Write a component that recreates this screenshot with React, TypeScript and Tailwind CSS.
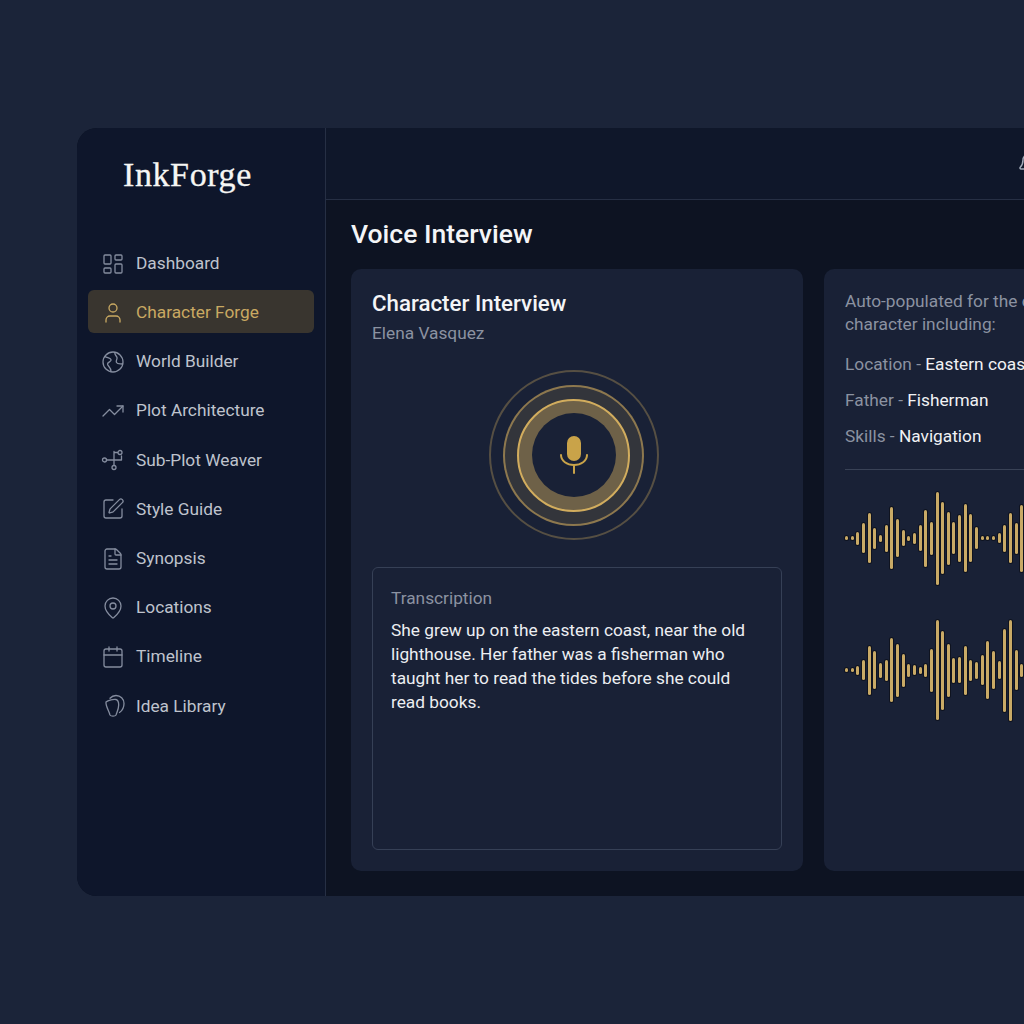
import React from "react";
import { Bell, Calendar, FileText, LayoutDashboard, MapPin, SquarePen, TrendingUp, User } from "lucide-react";

type IconProps = { className?: string; strokeWidth?: number };

function GlobeIcon({ className, strokeWidth }: IconProps) {
  return (
    <svg viewBox="0 0 24 24" fill="none" stroke="currentColor" strokeWidth={strokeWidth} strokeLinecap="round" strokeLinejoin="round" className={className}>
      <circle cx="12" cy="12" r="10" />
      <path d="M4 6.500c2 1.500 5 1 6 3s-3.500 2.500-3.500 4.500 3.500 3 3.500 7.500" />
      <path d="M14 2.500c-1 2 1.500 3 2 5s-1.500 3-.5 5 4 1 6 1.500" />
    </svg>
  );
}

function WeaverIcon({ className, strokeWidth }: IconProps) {
  return (
    <svg viewBox="0 0 24 24" fill="none" stroke="currentColor" strokeWidth={strokeWidth} strokeLinecap="round" className={className}>
      <circle cx="3.500" cy="12" r="2" />
      <circle cx="13" cy="19.500" r="2" />
      <circle cx="19" cy="4.500" r="2" />
      <path d="M5.500 12H20M13 3.500v14M13 4.500h3.500M20.500 8v4" />
    </svg>
  );
}

function IdeaIcon({ className, strokeWidth }: IconProps) {
  return (
    <svg viewBox="0 0 24 24" fill="none" stroke="currentColor" strokeWidth={strokeWidth} strokeLinecap="round" strokeLinejoin="round" className={className}>
      <path d="M5 8c2-2 8-3 10-2.500 2 .5 2.700 3 2.700 5.500 0 4-1.700 7-2.700 10-1 1.500-5 1.500-6 0C8 17 4.500 12 5 8Z" />
      <path d="M9 4.300C11 2 13 1.500 15 1.500c4.500 0 8 3.500 8 8 0 4-1.500 7-4.500 9" />
    </svg>
  );
}

const navItems = [
  { label: "Dashboard", icon: LayoutDashboard },
  { label: "Character Forge", icon: User, active: true },
  { label: "World Builder", icon: GlobeIcon },
  { label: "Plot Architecture", icon: TrendingUp },
  { label: "Sub-Plot Weaver", icon: WeaverIcon },
  { label: "Style Guide", icon: SquarePen },
  { label: "Synopsis", icon: FileText },
  { label: "Locations", icon: MapPin },
  { label: "Timeline", icon: Calendar },
  { label: "Idea Library", icon: IdeaIcon },
];

const waveOne = [4, 4, 13, 30, 50, 21, 7, 27, 62, 38, 16, 5, 11, 26, 57, 33, 93, 72, 53, 32, 47, 68, 48, 22, 4, 4, 4, 10, 27, 50, 31, 67];
const waveTwo = [4, 4, 9, 20, 49, 38, 15, 21, 64, 53, 33, 13, 10, 7, 13, 43, 100, 79, 53, 25, 26, 49, 21, 17, 30, 58, 38, 18, 83, 101, 40, 13];

const facts = [
  { key: "Location", value: "Eastern coast" },
  { key: "Father", value: "Fisherman" },
  { key: "Skills", value: "Navigation" },
];

function Wave({ bars }: { bars: number[] }) {
  return (
    <div className="flex h-[104px] items-center gap-[2.67px]">
      {bars.map((h, i) => (
        <div
          key={i}
          className="w-[3px] shrink-0 rounded-full bg-[#c9aa66] shadow-[0_0_0_1px_rgba(8,10,16,0.6)]"
          style={{ height: h }}
        />
      ))}
    </div>
  );
}

export default function App() {
  return (
    <div className="h-[1024px] w-[1024px] overflow-hidden bg-[#1b2439] pl-[77px] pt-[128px] font-['Roboto',sans-serif]">
      <div className="flex h-[768px] w-[947px] overflow-hidden rounded-l-[20px] bg-[#0d1322]">
        {/* Sidebar */}
        <aside className="flex w-[249px] shrink-0 flex-col border-r-[1.5px] border-[#262f44] bg-[#0e162b] px-[11px]">
          <div className="pl-[35px] pt-[25px] font-['Liberation_Serif',serif] text-[34px] leading-[44px] tracking-[0.6px] text-[#f6f6f4] [-webkit-text-stroke:0.3px_#f6f6f4]">
            InkForge
          </div>
          <nav className="mt-[44px] flex flex-col gap-[6.2px]">
            {navItems.map((item) => {
              const Icon = item.icon;
              return (
                <div
                  key={item.label}
                  className={
                    item.active
                      ? "flex h-[43px] items-center gap-[11px] rounded-md bg-[#39352f] pl-[13px] pt-[2px] text-[#c9a962]"
                      : "flex h-[43px] items-center gap-[11px] pl-[13px] pt-[2px] text-[#bfc3cd]"
                  }
                >
                  <Icon
                    className={item.active ? "h-[24px] w-[24px] text-[#c9a962]" : "h-[24px] w-[24px] text-[#858d9f]"}
                    strokeWidth={1.3}
                  />
                  <span className="text-[17.300px] font-normal leading-none">{item.label}</span>
                </div>
              );
            })}
          </nav>
        </aside>

        {/* Main */}
        <main className="flex min-w-0 flex-1 flex-col">
          <header className="flex h-[72px] shrink-0 items-center overflow-hidden border-b-[1.5px] border-[#262f44] bg-[#0f172a] pl-[691px]">
            <Bell className="h-[24px] w-[24px] shrink-0 text-[#a4abba]" strokeWidth={1.5} />
          </header>
          <div className="flex min-h-0 flex-1 flex-col px-[25px]">
            <h1 className="pt-[16px] text-[26.500px] font-medium leading-[35px] text-[#f4f5f7]">Voice Interview</h1>
            <div className="mt-[18px] flex gap-[21px]">
              {/* Interview card */}
              <section className="flex h-[602px] w-[452px] shrink-0 flex-col rounded-[10px] bg-[#192136] px-[21px] pb-[21px] pt-[20px]">
                <h2 className="text-[22.300px] font-medium leading-[28px] text-[#f4f5f7]">Character Interview</h2>
                <p className="mt-[3px] text-[17.300px] font-normal leading-[26px] text-[#8b92a1]">Elena Vasquez</p>
                <div className="mt-[24px] flex justify-center pr-[7px]">
                  <div className="flex h-[170px] w-[170px] items-center justify-center rounded-full border-2 border-[#c9a55c]/35">
                    <div className="flex h-[141px] w-[141px] items-center justify-center rounded-full border-2 border-[#c9a55c]/60 bg-[#c9a55c]/15">
                      <div className="flex h-[113px] w-[113px] items-center justify-center rounded-full border-2 border-[#d2ad5e] bg-[#c9a55c]/40">
                        <div className="flex h-[84px] w-[84px] items-center justify-center rounded-full bg-[#192136]">
                          <svg viewBox="0 0 28 38" className="h-[38px] w-[28px]" fill="none">
                            <rect x="7" y="0" width="14" height="25" rx="7" fill="#c9a349" />
                            <path d="M1 19c0 6 6 10 13 10s13-4 13-10" stroke="#c9a349" strokeWidth="2" strokeLinecap="round" />
                            <path d="M14 29v8" stroke="#c9a349" strokeWidth="2" strokeLinecap="round" />
                          </svg>
                        </div>
                      </div>
                    </div>
                  </div>
                </div>
                <div className="mt-[27px] min-h-0 flex-1 rounded-md border border-[#364056] px-[18px] pt-[18px]">
                  <div className="text-[17.300px] font-normal leading-[24px] text-[#8b92a1]">Transcription</div>
                  <p className="mt-[8px] text-[17.300px] leading-[24px] text-[#eceef1]">
                    She grew up on the eastern coast, near the old lighthouse. Her father was a fisherman who taught her to read the tides before she could read books.
                  </p>
                </div>
              </section>

              {/* Extracted details card */}
              <section className="h-[602px] w-[452px] shrink-0 rounded-[10px] bg-[#192136] px-[21px] pt-[21px]">
                <p className="text-[17.300px] font-normal leading-[22.500px] text-[#8b92a1]">
                  Auto-populated for the core
                  <br />
                  character including:
                </p>
                <div className="mt-[16px] flex flex-col gap-[10px]">
                  {facts.map((fact) => (
                    <div key={fact.key} className="text-[17.300px] font-normal leading-[26px] text-[#8b92a1]">
                      {fact.key} - <span className="text-[#f1f2f4]">{fact.value}</span>
                    </div>
                  ))}
                </div>
                <div className="mt-[20px] h-px bg-[#394256]" />
                <div className="mt-[16px]">
                  <Wave bars={waveOne} />
                </div>
                <div className="mt-[28px]">
                  <Wave bars={waveTwo} />
                </div>
              </section>
            </div>
          </div>
        </main>
      </div>
    </div>
  );
}
